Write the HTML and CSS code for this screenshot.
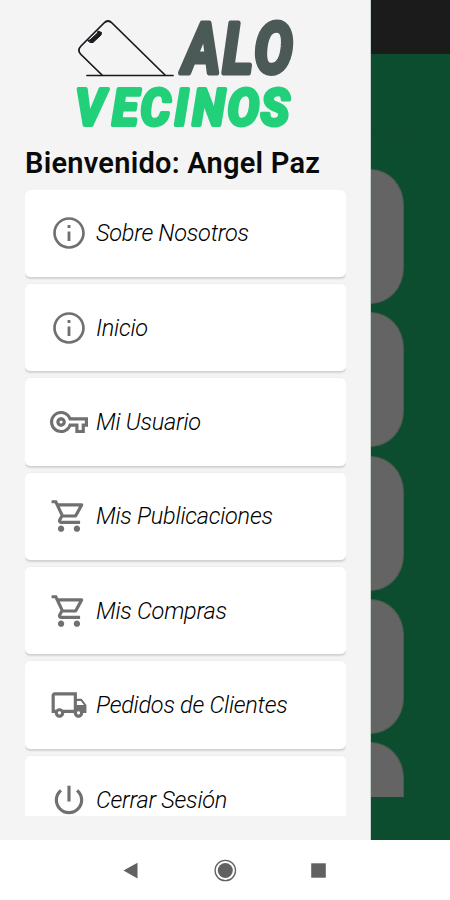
FILE: index.html
```
<!DOCTYPE html>
<html lang="es">
<head>
<meta charset="utf-8">
<title>Alo Vecinos</title>
<link rel="stylesheet" href="styles.css">
</head>
<body>
<svg class="defs" width="0" height="0">
  <symbol id="info" viewBox="0 0 24 24"><path d="M11.100 7h1.800v1.800h-1.800V7zm0 4h1.800v6h-1.800v-6zm.9-9C6.480 2 2 6.480 2 12s4.480 10 10 10 10-4.480 10-10S17.520 2 12 2zm0 18.300c-4.580 0-8.300-3.720-8.300-8.300s3.720-8.300 8.300-8.300 8.300 3.720 8.300 8.300-3.720 8.300-8.300 8.300z"/></symbol>
  <symbol id="key" viewBox="0 0 24 24"><path d="M22 19h-6v-4h-2.680c-1.140 2.420-3.600 4-6.320 4-3.860 0-7-3.140-7-7s3.140-7 7-7c2.720 0 5.170 1.580 6.320 4H24v6h-2v4zm-4-2h2v-4h2v-2H11.940l-.23-.67C11.010 8.340 9.110 7 7 7c-2.760 0-5 2.240-5 5s2.240 5 5 5c2.110 0 4.010-1.340 4.710-3.330l.23-.67H18v4zM7 15c-1.650 0-3-1.350-3-3s1.350-3 3-3 3 1.350 3 3-1.350 3-3 3zm0-4c-.55 0-1 .45-1 1s.45 1 1 1 1-.45 1-1-.45-1-1-1z"/></symbol>
  <symbol id="cart" viewBox="0 0 24 24"><path d="M15.550 13c.75 0 1.410-.41 1.750-1.030l3.580-6.490c.37-.66-.11-1.480-.87-1.480H5.210l-.94-2H1v2h2l3.600 7.590-1.350 2.440C4.520 15.370 5.480 17 7 17h12v-2H7l1.100-2h7.450zM6.160 6h12.150l-2.760 5H8.530L6.160 6zM7 18c-1.100 0-1.990.9-1.990 2S5.900 22 7 22s2-.9 2-2-.9-2-2-2zm10 0c-1.100 0-1.990.9-1.990 2s.89 2 1.990 2 2-.9 2-2-.9-2-2-2z"/></symbol>
  <symbol id="truck" viewBox="0 0 24 24"><path d="M20 8h-3V4H3c-1.100 0-2 .9-2 2v11h2c0 1.660 1.340 3 3 3s3-1.340 3-3h6c0 1.660 1.340 3 3 3s3-1.340 3-3h2v-5l-3-4zm-.5 1.500l1.960 2.500H17V9.500h2.500zM6 18c-.55 0-1-.45-1-1s.45-1 1-1 1 .45 1 1-.45 1-1 1zm2.220-3c-.55-.61-1.330-1-2.220-1s-1.670.39-2.220 1H3V6h12v9H8.220zM18 18c-.55 0-1-.45-1-1s.45-1 1-1 1 .45 1 1-.45 1-1 1z"/></symbol>
  <symbol id="power" viewBox="0 0 24 24"><path d="M13 3h-2v10h2V3zm4.830 2.170l-1.420 1.420C17.990 7.860 19 9.810 19 12c0 3.870-3.130 7-7 7s-7-3.130-7-7c0-2.190 1.010-4.140 2.580-5.420L6.170 5.170C4.230 6.820 3 9.260 3 12c0 4.970 4.030 9 9 9s9-4.030 9-9c0-2.740-1.230-5.180-3.170-6.830z"/></symbol>
</svg>
<div class="screen">
  <div class="content">
    <aside class="drawer">
      <svg class="logo" viewBox="0 0 240 130" role="img" aria-label="Alo Vecinos">
        <g class="phone">
          <path d="M31 75 L9.500 54 Q6 50 10 46 L33 23 Q37 19 41 23 L94 75"/>
          <path d="M16 75.500H102"/>
          <path class="notch" d="M17 40.500l2-.5 7.500-7 .5-2 3.500 1.500-.5 2.500-8 7.500-2.500 0z"/>
        </g>
        <text class="word alo" transform="scale(.82 1)" x="136.500 185 223.500" y="73">ALO</text>
        <text class="word vecinos" transform="scale(.96 1)" x="4.500 43 72.500 108 126.500 163 198" y="125">VECINOS</text>
      </svg>
      <h1 class="welcome">Bienvenido: Angel Paz</h1>
      <nav class="menu">
        <a class="card"><svg class="icon"><use href="#info"/></svg><span>Sobre Nosotros</span></a>
        <a class="card"><svg class="icon"><use href="#info"/></svg><span>Inicio</span></a>
        <a class="card"><svg class="icon"><use href="#key"/></svg><span>Mi Usuario</span></a>
        <a class="card"><svg class="icon"><use href="#cart"/></svg><span>Mis Publicaciones</span></a>
        <a class="card"><svg class="icon"><use href="#cart"/></svg><span>Mis Compras</span></a>
        <a class="card"><svg class="icon"><use href="#truck"/></svg><span>Pedidos de Clientes</span></a>
        <a class="card"><svg class="icon"><use href="#power"/></svg><span>Cerrar Sesión</span></a>
      </nav>
    </aside>
    <main class="page">
      <div class="statusbar"></div>
      <div class="rule"></div>
      <div class="tiles">
        <div class="tile"></div><div class="tile"></div><div class="tile"></div><div class="tile"></div><div class="tile"></div>
      </div>
    </main>
  </div>
  <footer class="navbar">
    <svg class="navicon" viewBox="0 0 24 24"><path d="M3.500 12.500L17.500 4.700v15.800z"/></svg>
    <svg class="navicon" viewBox="0 0 24 24"><circle cx="12.300" cy="12.500" r="7.500"/><circle class="ring" cx="12.300" cy="12.500" r="10.200"/></svg>
    <svg class="navicon" viewBox="0 0 24 24"><path d="M4.200 5.300h14.600v14.400H4.200z"/></svg>
  </footer>
</div>
</body>
</html>
```
FILE: styles.css
```
* { box-sizing: border-box; }
body {
  margin: 0;
  font-family: Roboto, "Liberation Sans", sans-serif;
  background: #fff;
}
.defs { display: block; }
.screen {
  display: flex;
  flex-direction: column;
  width: 450px;
  height: 900px;
  overflow: hidden;
}
.content { display: flex; height: 840px; }
.drawer {
  width: 371px;
  padding: 0 24px 0 25px;
  background: #f4f4f4;
  border-right: 1px solid #c9d3cd;
}
.logo {
  display: block;
  width: 240px;
  height: 130px;
  margin-left: 46px;
  overflow: visible;
}
.phone {
  fill: none;
  stroke: #17171c;
  stroke-width: 1.7;
  stroke-linecap: round;
}
.phone .notch { fill: #1d1d26; stroke-width: 1; }
.word {
  font-family: Roboto, sans-serif;
  font-weight: 700;
  font-style: italic;
  stroke-linejoin: round;
}
.alo { font-size: 70px; fill: #4b5957; stroke: #4b5957; stroke-width: 5; }
.vecinos { font-size: 49px; fill: #22d07a; stroke: #22d07a; stroke-width: 4; }
.welcome {
  margin: 15px 0 7.500px;
  height: 37px;
  font-size: 29px;
  line-height: 37px;
  font-weight: 600;
  letter-spacing: .25px;
  color: #0a0a0a;
  white-space: nowrap;
}
.menu {
  display: flex;
  flex-direction: column;
  gap: 7px;
  height: 626.500px;
  overflow: hidden;
}
.card {
  display: flex;
  flex: 0 0 87.400px;
  align-items: center;
  gap: 8px;
  padding-left: 25px;
  border-radius: 5px;
  background: #fff;
  box-shadow: 0 2px 2px rgba(0, 0, 0, .13), 0 0 2px rgba(0, 0, 0, .08);
  font-size: 23.500px;
  font-style: italic;
  font-weight: 350;
  letter-spacing: -.25px;
  color: #000;
  white-space: nowrap;
}
.icon { width: 38px; height: 38px; fill: #707070; }
.page { flex: 1; background: #0d4d2f; }
.statusbar { height: 54px; background: #1b1b1b; }
.rule { width: 49px; height: 1px; margin-top: 78px; background: #10472e; }
.tiles {
  display: flex;
  flex-direction: column;
  gap: 8.300px;
  height: 628px;
  margin-top: 36px;
  overflow: hidden;
}
.tile {
  flex: 0 0 135px;
  width: 33px;
  border: solid #4d5a51;
  border-width: 1px 1px 1px 0;
  border-radius: 0 33px 33px 0 / 0 36px 36px 0;
  background: #646464;
}
.navbar {
  display: flex;
  flex: 1;
  align-items: center;
  justify-content: center;
  gap: 69.500px;
  background: #fff;
}
.navicon { width: 24px; height: 24px; fill: #616161; }
.ring { fill: none; stroke: #616161; stroke-width: 1.3; }
```
